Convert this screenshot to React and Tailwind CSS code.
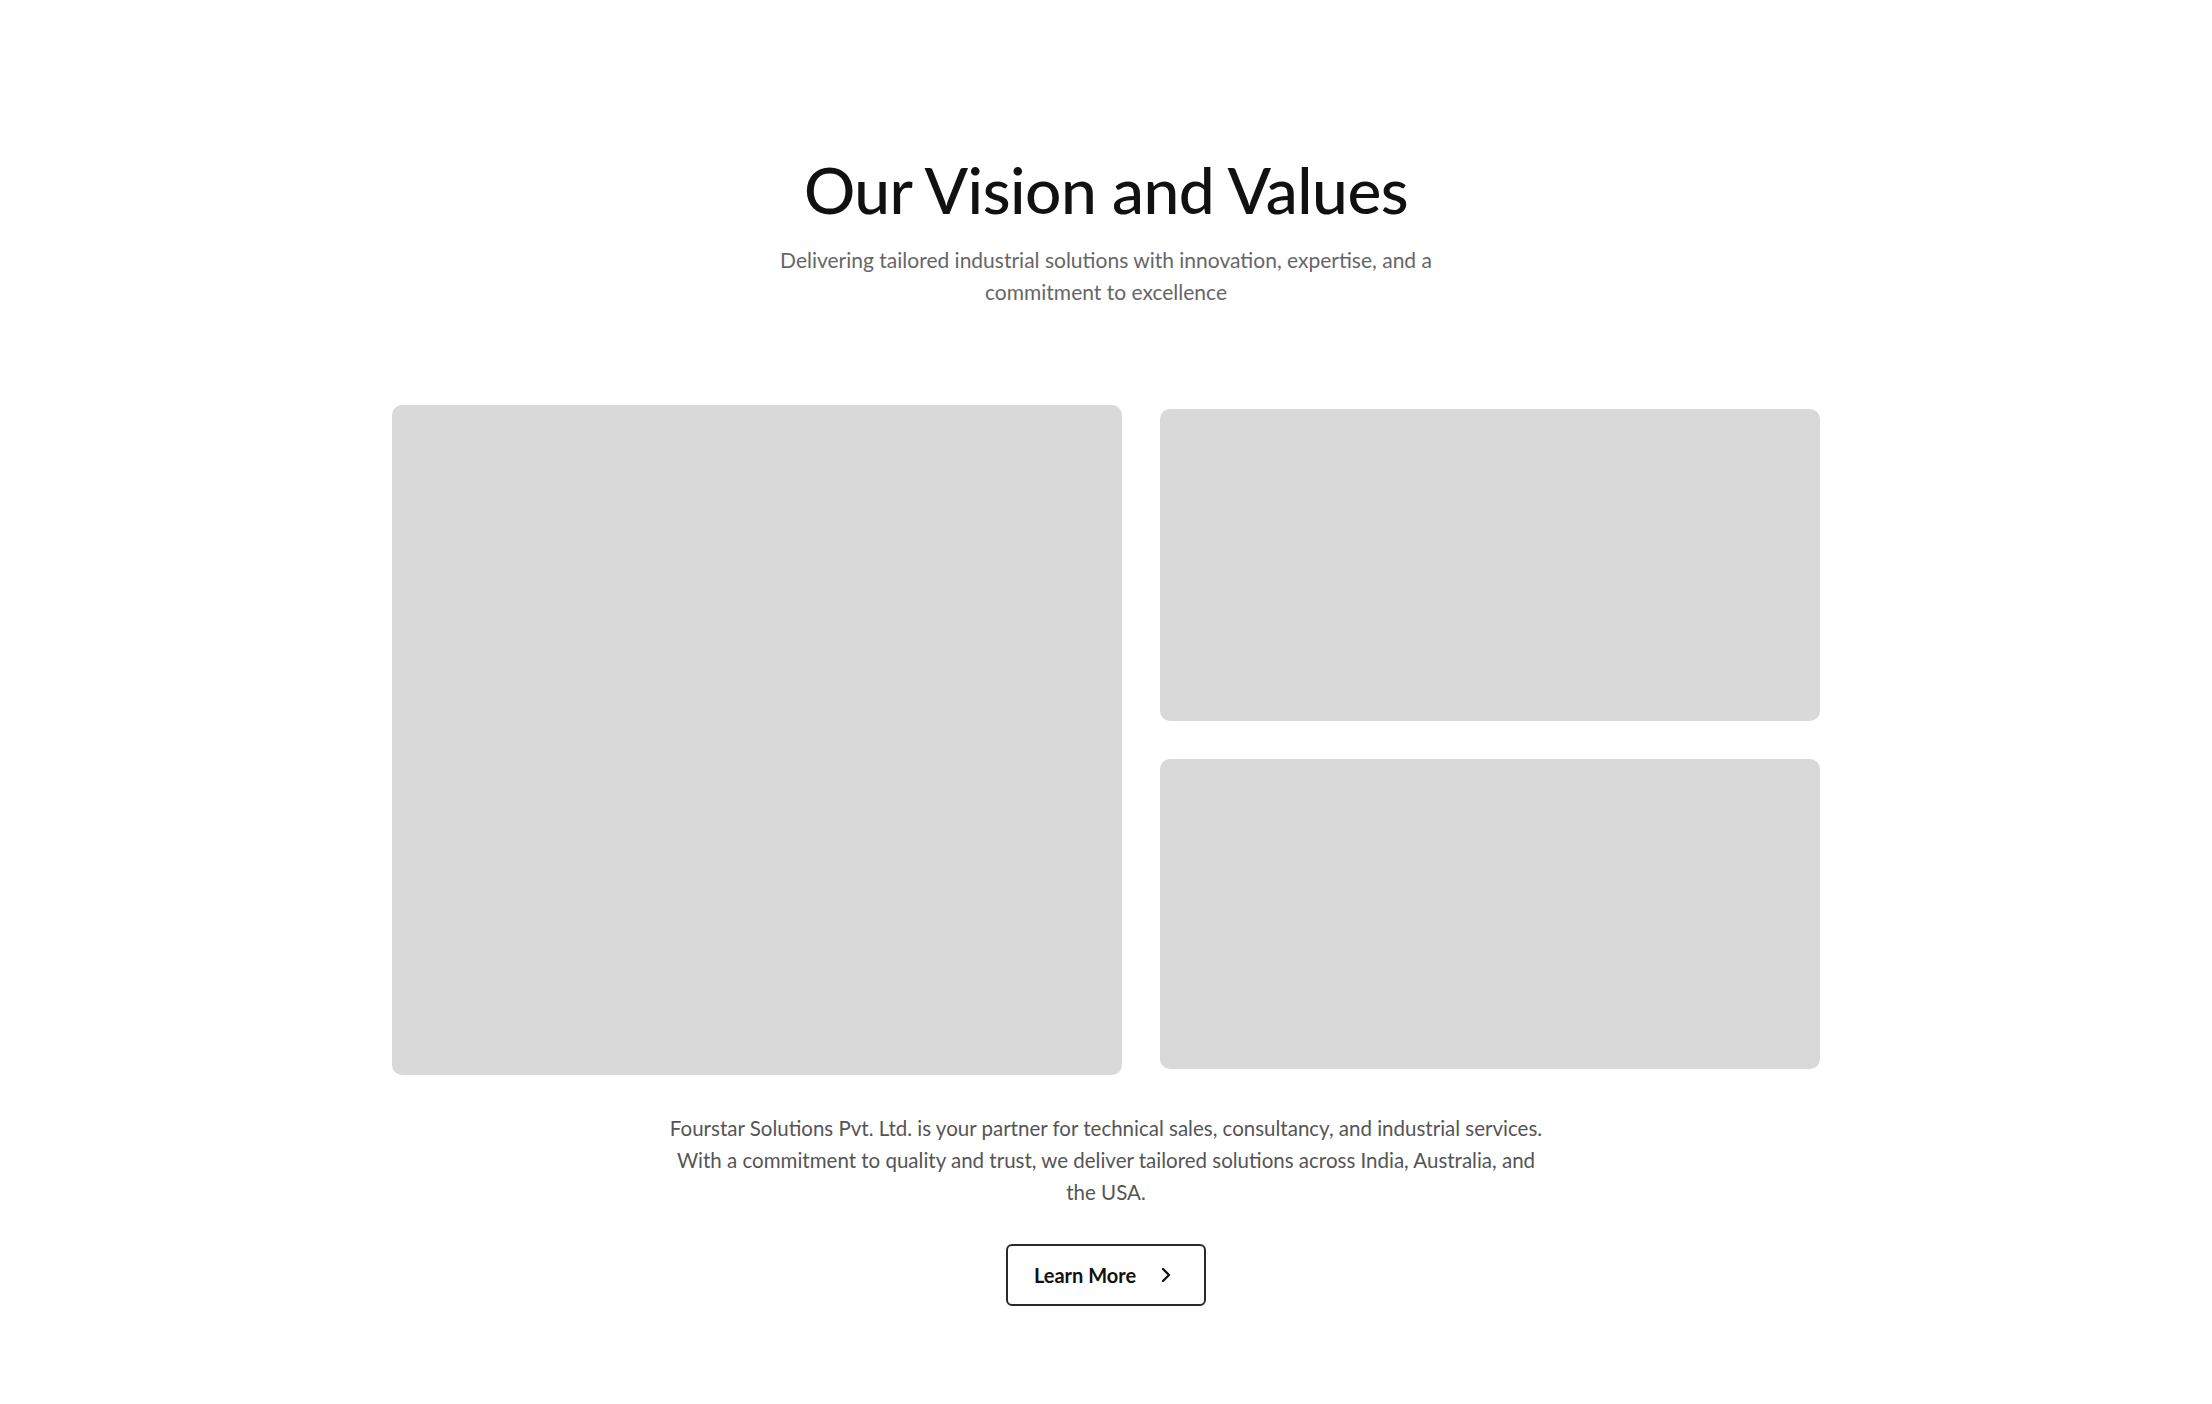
import { ChevronRight } from "lucide-react";

export default function App() {
  return (
    <section
      className="min-h-[1404px] bg-white pt-[154px] pb-[98px] flex flex-col items-center"
      style={{ fontFamily: "Lato, 'Noto Sans', sans-serif" }}
    >
      {/* Heading */}
      <h2 className="text-[64px] leading-[72px] font-medium tracking-[-0.5px] text-[#111111] text-center">
        Our Vision and Values
      </h2>
      <p className="mt-[18px] max-w-[680px] text-center text-[21px] leading-[32px] text-[#666666]">
        Delivering tailored industrial solutions with innovation, expertise, and a
        commitment to excellence
      </p>

      {/* Image placeholders */}
      <div className="mt-[97px] flex items-start gap-[38px]">
        <div className="w-[730px] h-[670px] rounded-[10px] bg-[#d9d9d9]" />
        <div className="mt-[4px] flex flex-col gap-[38px]">
          <div className="w-[660px] h-[312px] rounded-[10px] bg-[#d9d9d9]" />
          <div className="w-[660px] h-[310px] rounded-[10px] bg-[#d9d9d9]" />
        </div>
      </div>

      {/* About copy */}
      <p className="mt-[37px] max-w-[890px] text-center text-[20.5px] leading-[32px] text-[#555555]">
        Fourstar Solutions Pvt. Ltd. is your partner for technical sales, consultancy, and
        industrial services. With a commitment to quality and trust, we deliver tailored
        solutions across India, Australia, and the USA.
      </p>

      <button className="mt-[36px] w-[200px] h-[62px] flex items-center justify-center gap-[18px] rounded-[6px] border-2 border-[#2a2a2a] text-[20px] font-bold text-[#111111]">
        Learn More
        <ChevronRight className="w-[24px] h-[24px]" strokeWidth={2.25} />
      </button>
    </section>
  );
}
